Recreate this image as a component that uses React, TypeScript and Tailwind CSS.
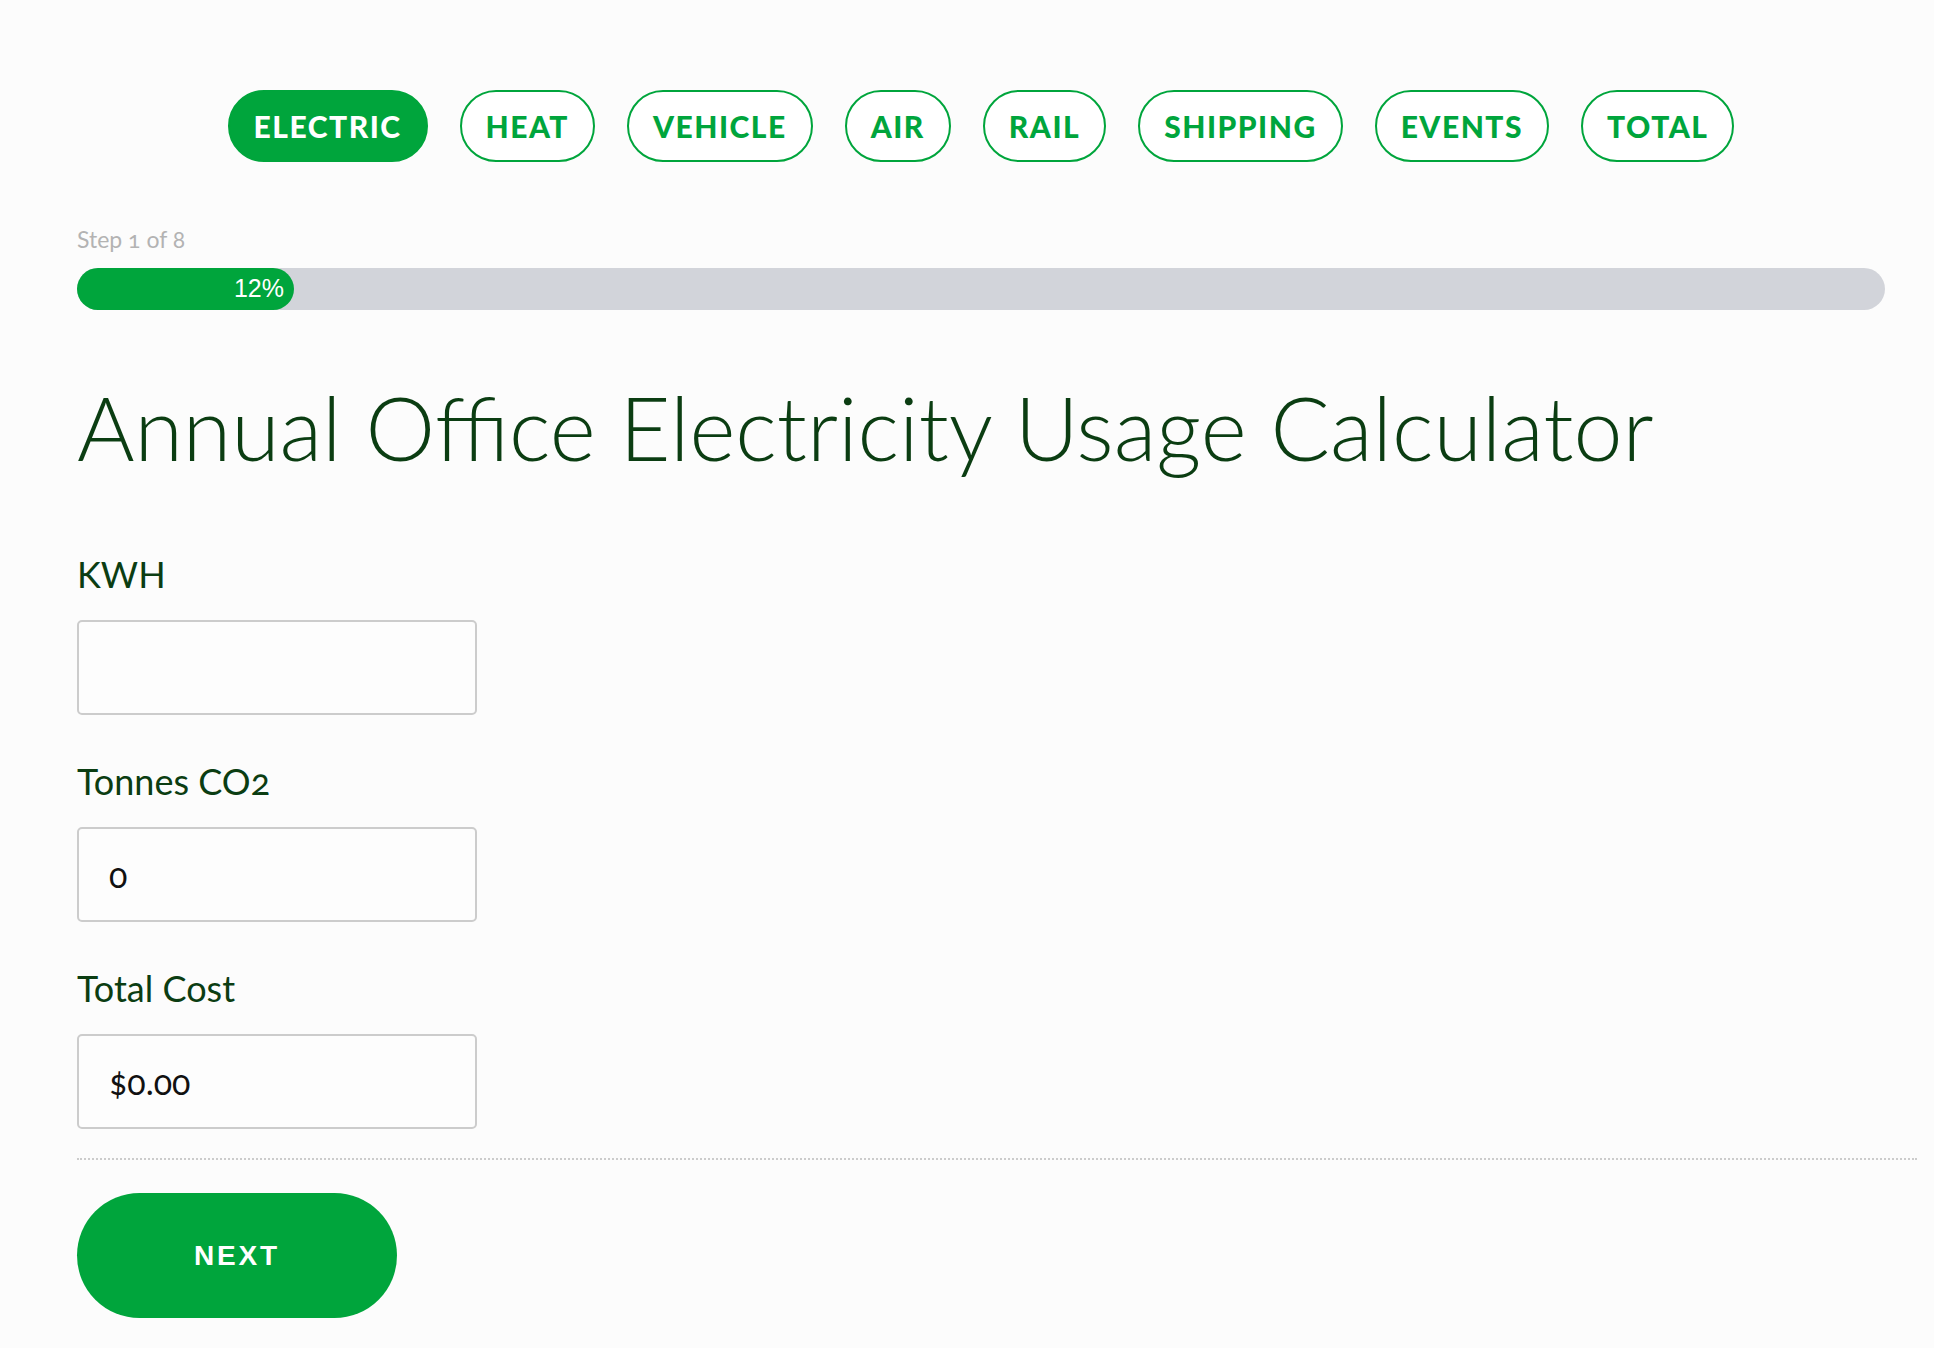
import React from "react";

const tabs = ["ELECTRIC", "HEAT", "VEHICLE", "AIR", "RAIL", "SHIPPING", "EVENTS", "TOTAL"];

function Field({ label, value }: { label: string; value: string }) {
  return (
    <div className="flex flex-col">
      <label className="text-[36px] leading-[42px] text-[#0b3d12] font-['Lato',sans-serif] oldstyle-nums mb-[25px]">
        {label}
      </label>
      <input
        readOnly
        value={value}
        className="w-[400px] h-[95px] border-2 border-[#cccccc] rounded-[5px] bg-[#fdfdfd] pl-[30px] text-[34px] text-[#111] font-['Lato',sans-serif] oldstyle-nums outline-none"
      />
    </div>
  );
}

export default function App() {
  return (
    <div className="min-h-[1348px] w-full bg-[#fcfcfc] pl-[77px] pr-[17px] pt-[90px]">
      <div className="mr-[32px]">
        <div className="flex justify-center gap-[32px]">
          {tabs.map((t, i) => (
            <button
              key={t}
              className={
                i === 0
                  ? "h-[72px] px-[24px] rounded-full border-2 border-[#00a53c] bg-[#00a53c] text-white text-[30px] font-black tracking-[1.5px] font-['Lato',sans-serif]"
                  : "h-[72px] px-[24px] rounded-full border-2 border-[#00a53c] bg-white text-[#00a53c] text-[30px] font-black tracking-[1.5px] font-['Lato',sans-serif]"
              }
            >
              {t}
            </button>
          ))}
        </div>
        <div className="mt-[64px] text-[23px] leading-[26px] text-[#b3b3b3] font-['Lato',sans-serif] oldstyle-nums">
          Step 1 of 8
        </div>
        <div className="mt-[16px] h-[42px] w-full rounded-full bg-[#d2d4da]">
          <div
            className="h-full rounded-full bg-[#00a53c] flex items-center justify-end pr-[10px] text-white text-[25px] font-['Liberation_Sans',Arial,sans-serif]"
            style={{ width: "12%" }}
          >
            12%
          </div>
        </div>
        <h1 className="mt-[72px] text-[88px] leading-[90px] font-light text-[#0b3d12] font-['Lato',sans-serif]">
          Annual Office Electricity Usage Calculator
        </h1>
      </div>
      <div className="mt-[81px] flex flex-col gap-[45px]">
        <Field label="KWH" value="" />
        <Field label="Tonnes CO2" value="0" />
        <Field label="Total Cost" value="$0.00" />
      </div>
      <div className="mt-[29px] border-t-2 border-dotted border-[#cccccc]" />
      <button className="mt-[33px] w-[320px] h-[125px] rounded-full bg-[#00a53c] text-white text-[28px] font-bold tracking-[0.1em] font-['Liberation_Sans',Arial,sans-serif]">
        NEXT
      </button>
    </div>
  );
}
